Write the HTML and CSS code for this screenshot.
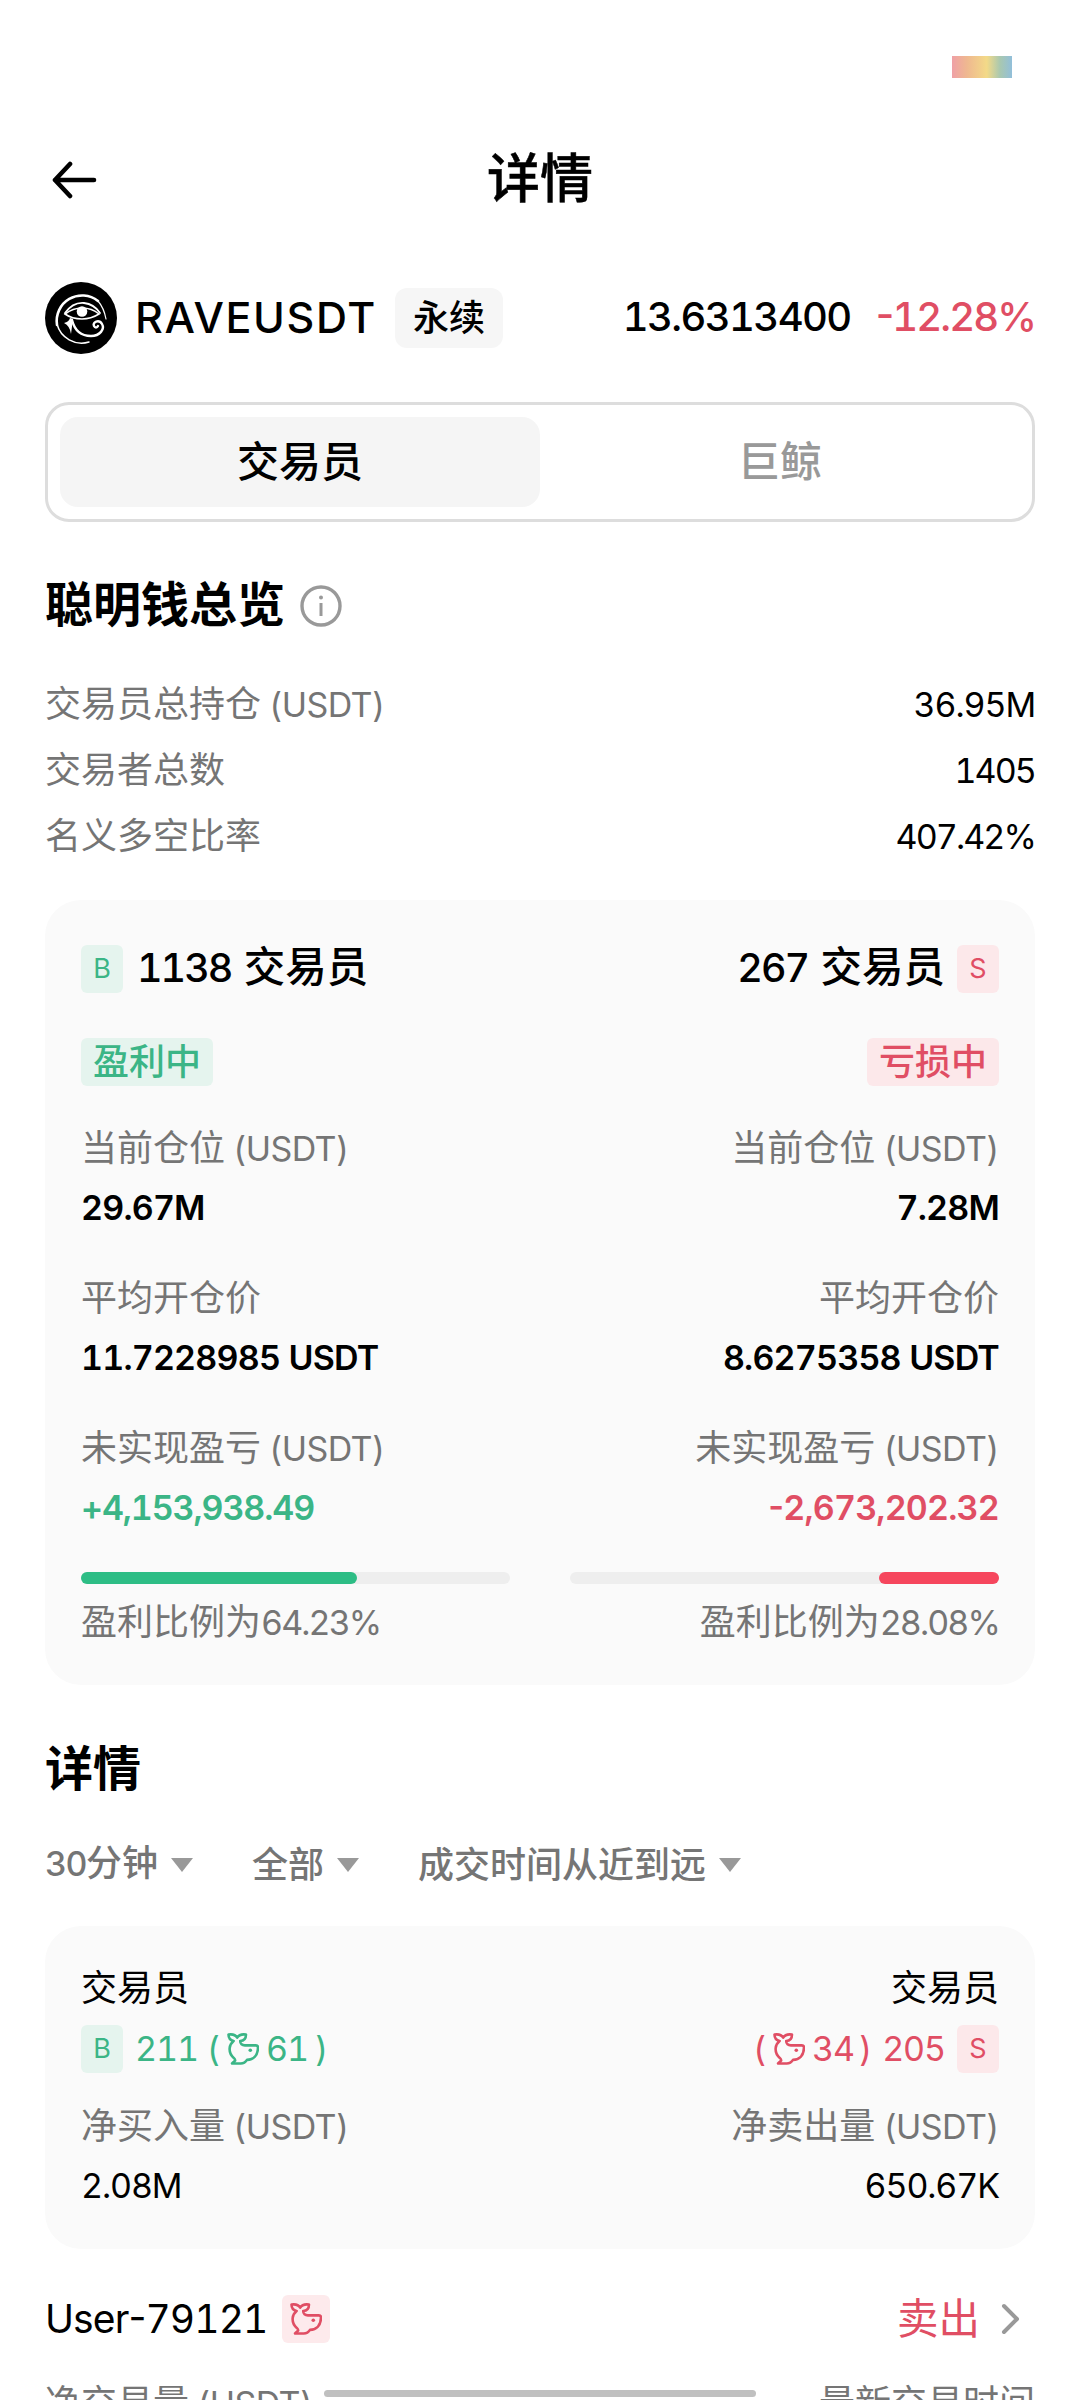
FILE: index.html
```html
<!DOCTYPE html>
<html lang="zh-CN">
<head>
<meta charset="utf-8">
<title>详情</title>
<link rel="stylesheet" href="styles.css">
</head>
<body>
<svg class="defs" aria-hidden="true">
  <symbol id="whale" viewBox="0 0 32 32">
    <path d="M1.500 1.500C5 1 8.500 1.600 10.200 4.600C11.900 1.600 15 1 19 1.500C19 5.500 17 7.800 13.200 8C13.200 10.800 15 12.600 18.400 12.400H28.800C30.300 12.400 31 13.200 31 14.600C30.800 22.500 26.500 26.700 20 26.900C18.200 29.800 16 30.700 13 30.500H5C6 29 7 28.600 8.200 27.500C8.200 26.500 7.800 25.800 6.800 24.900C3.400 22.200 2.300 18.500 2.700 14.800C3 12 4.300 9.800 6.600 7.900C3.200 7.200 1.500 5 1.500 1.500Z" fill="none" stroke="currentColor" stroke-width="2.600" stroke-linejoin="round"/>
    <circle cx="23.300" cy="17.300" r="1.800" fill="currentColor"/>
  </symbol>
</svg>
<div class="page">
  <div class="status"><span class="chip"></span></div>
  <header class="header">
    <svg class="back" viewBox="0 0 46 38"><path d="M19 3L4 19L19 35M4 19H43" fill="none" stroke="#000" stroke-width="4.600" stroke-linecap="round" stroke-linejoin="round"/></svg>
    <h1 class="title">详情</h1>
  </header>

  <section class="coin">
    <svg class="logo" viewBox="0 0 72 72">
      <circle cx="36" cy="36" r="36" fill="#000"/>
      <g fill="none" stroke="#fff" stroke-linecap="round">
        <path d="M53 19A25.500 25.500 0 0 0 12 43" stroke-width="2.600"/>
        <path d="M12 42A25.500 25.500 0 0 0 44 60" stroke-width="1.500"/>
        <path d="M53 19Q59 26 61 37" stroke-width="1.200"/>
        <path d="M20 31Q28 20 39 21Q49 22 55 31" stroke-width="1.800"/>
        <path d="M20 32Q28 26 37 26Q47 26 54 32Q46 37 37 37Q27 37 20 32Z" stroke-width="1.600"/>
        <path d="M27 38C30 50 38 54 46 54C55 54 60 47 57 42C54 37 47 40 49 44C50 46 52 46 53 44" stroke-width="2.400"/>
      </g>
      <circle cx="37" cy="29.500" r="5.300" fill="#fff"/>
      <path d="M25 36L28 37L26 52Q25 44 19 41Q24 40 25 36Z" fill="#fff"/>
    </svg>
    <span class="symbol">RAVEUSDT</span>
    <span class="perp">永续</span>
    <span class="price">13.6313400</span>
    <span class="change"><span class="dash">-</span>12.28%</span>
  </section>

  <nav class="tabs">
    <div class="tab tab-active">交易员</div>
    <div class="tab">巨鲸</div>
  </nav>

  <div class="heading">
    <h2>聪明钱总览</h2>
    <svg class="info" viewBox="0 0 42 42"><circle cx="21" cy="21" r="19" fill="none" stroke="#999" stroke-width="3.400"/><circle cx="21" cy="12.500" r="2" fill="#999"/><path d="M21 18V31" stroke="#999" stroke-width="3"/></svg>
  </div>

  <dl class="stats">
    <div class="stat"><dt>交易员总持仓 <span class="en unit">(USDT)</span></dt><dd class="en">36.95M</dd></div>
    <div class="stat"><dt>交易者总数</dt><dd class="en tight">1405</dd></div>
    <div class="stat"><dt>名义多空比率</dt><dd class="en tight">407.42%</dd></div>
  </dl>

  <section class="card overview">
    <div class="side">
      <div class="count"><span class="badge buy">B</span><span><span class="num">1138</span> 交易员</span></div>
      <span class="tag buy">盈利中</span>
      <div class="metric"><div class="label">当前仓位 <span class="en unit">(USDT)</span></div><div class="value en">29.67M</div></div>
      <div class="metric"><div class="label">平均开仓价</div><div class="value en">11.7228985 USDT</div></div>
      <div class="metric"><div class="label">未实现盈亏 <span class="en unit">(USDT)</span></div><div class="value en gain up">+4,153,938.49</div></div>
      <div class="bar"><div class="fill fill-up" style="width:64.23%"></div></div>
      <div class="label ratio">盈利比例为<span class="en tight">64.23%</span></div>
    </div>
    <div class="side right">
      <div class="count"><span><span class="num">267</span> 交易员</span><span class="badge sell">S</span></div>
      <span class="tag sell">亏损中</span>
      <div class="metric"><div class="label">当前仓位 <span class="en unit">(USDT)</span></div><div class="value en">7.28M</div></div>
      <div class="metric"><div class="label">平均开仓价</div><div class="value en">8.6275358 USDT</div></div>
      <div class="metric"><div class="label">未实现盈亏 <span class="en unit">(USDT)</span></div><div class="value en down"><span class="dash">-</span>2,673,202.32</div></div>
      <div class="bar"><div class="fill fill-down" style="width:28.08%"></div></div>
      <div class="label ratio">盈利比例为<span class="en tight">28.08%</span></div>
    </div>
  </section>

  <div class="heading details"><h2>详情</h2></div>

  <div class="filters">
    <span class="filter"><span><span class="en">30</span>分钟</span><i class="caret"></i></span>
    <span class="filter">全部<i class="caret"></i></span>
    <span class="filter">成交时间从近到远<i class="caret"></i></span>
  </div>

  <section class="card flow">
    <div class="side">
      <div class="label dark">交易员</div>
      <div class="whales up"><span class="badge buy">B</span><span class="en total">211</span><span class="en open">(</span><svg class="whale"><use href="#whale"/></svg><span class="en part">61</span><span class="en close">)</span></div>
      <div class="label net">净买入量 <span class="en unit">(USDT)</span></div>
      <div class="value en thin">2.08M</div>
    </div>
    <div class="side right">
      <div class="label dark">交易员</div>
      <div class="whales down"><span class="en">(</span><svg class="whale"><use href="#whale"/></svg><span class="en part">34</span><span class="en close">)</span><span class="en total">205</span><span class="badge sell">S</span></div>
      <div class="label net">净卖出量 <span class="en unit">(USDT)</span></div>
      <div class="value en thin">650.67K</div>
    </div>
  </section>

  <div class="user">
    <span class="username">User<span class="dash">-</span>79121</span>
    <span class="whale-badge"><svg class="whale"><use href="#whale"/></svg></span>
    <span class="action">卖出</span>
    <svg class="chevron" viewBox="0 0 20 32"><path d="M3 3L16 16L3 29" fill="none" stroke="#999" stroke-width="4" stroke-linecap="round" stroke-linejoin="round"/></svg>
  </div>
  <div class="last"><span>净交易量 <span class="en unit">(USDT)</span></span><span>最新交易时间</span></div>
  <div class="home"></div>
</div>
</body>
</html>
```
FILE: styles.css
```css
* { box-sizing: border-box; }
body {
  margin: 0;
  background: #fff;
  color: #000;
  font-family: "Noto Sans CJK SC", sans-serif;
  font-size: 36px;
}
h1, h2, dl, dd { margin: 0; }
.defs { position: absolute; width: 0; height: 0; }
.page {
  position: relative;
  width: 1080px;
  height: 2400px;
  padding: 0 45px;
  overflow: hidden;
}
.en, .num, .symbol, .price, .change, .username, .badge {
  font-family: Inter, sans-serif;
  font-feature-settings: "tnum";
}
.en { font-size: 34px; letter-spacing: -1.1px; }
.unit { letter-spacing: -0.6px; }
.tight { letter-spacing: -1.9px; }
.dash { font-feature-settings: "case"; }

.status { height: 120px; display: flex; justify-content: flex-end; padding: 56px 23px 0 0; }
.chip { width: 60px; height: 22px; background: linear-gradient(90deg, #efa0a6, #efb890 25%, #f3da88 58%, #a9c8b0 80%, #92bfda); }
.header { height: 120px; display: flex; align-items: center; }
.back { width: 46px; height: 38px; margin-left: 6px; }
.title { flex: 1; margin: 0 52px 10px 0; text-align: center; font-size: 53px; font-weight: 500; line-height: 80px; -webkit-text-stroke: 0.5px #000; }

.coin { height: 72px; margin-top: 42px; display: flex; align-items: center; }
.logo { width: 72px; height: 72px; }
.symbol { margin: -3px 0 0 18px; font-size: 43px; font-weight: 500; letter-spacing: 1.6px; }
.perp { width: 108px; height: 60px; margin-left: 18px; border-radius: 12px; background: #f6f6f6; line-height: 55px; text-align: center; font-weight: 500; }
.price { margin: -3px 0 0 auto; font-size: 40px; font-weight: 500; letter-spacing: -1.6px; }
.change { margin: -3px 0 0 25px; color: #e04e64; font-size: 40px; font-weight: 500; letter-spacing: -1.9px; }

.tabs { height: 120px; margin-top: 48px; padding: 12px; display: flex; border: 3px solid #ddd; border-radius: 24px; }
.tab { flex: 1; border-radius: 18px; line-height: 83px; text-align: center; font-size: 42px; font-weight: 500; color: #999; }
.tab-active { background: #f5f5f5; color: #000; }

.heading { height: 60px; margin-top: 50px; display: flex; align-items: center; }
.heading h2 { margin-top: -2px; font-size: 48px; line-height: 60px; font-weight: 700; }
.info { width: 42px; height: 42px; margin: 8px 0 0 15px; }

.stats { margin-top: 36px; }
.stat { display: flex; justify-content: space-between; align-items: baseline; height: 66px; line-height: 66px; }
.stat dt, .label { color: #757575; }

.card { padding: 45px 36px 35px; display: flex; justify-content: space-between; border-radius: 36px; background: #fafafa; }
.overview { margin-top: 34px; height: 785px; }
.side { width: 429px; display: flex; flex-direction: column; align-items: flex-start; }
.right { align-items: flex-end; }
.count { height: 48px; display: flex; align-items: center; gap: 14px; line-height: 42px; font-size: 41.5px; font-weight: 500; white-space: pre; }
.right .count { gap: 12px; }
.count > span:not(.badge) { margin-top: -6px; word-spacing: 3px; }
.num { font-size: 39.5px; letter-spacing: -2px; }
.badge { width: 42px; height: 48px; border-radius: 6px; line-height: 47px; text-align: center; font-size: 27px; font-weight: 400; }
.tag { height: 48px; margin-top: 45px; padding: 0 12px; border-radius: 6px; line-height: 42px; font-weight: 500; }
.buy { background: #e5f4ee; color: #3bb586; }
.sell { background: #fce8ea; color: #e04e64; }
.metric { margin-bottom: 28px; }
.tag + .metric { margin-top: 30px; }
.label { line-height: 58px; height: 60px; }
.value { height: 60px; margin-top: 2px; line-height: 60px; font-weight: 600; letter-spacing: -0.8px; }
.gain { letter-spacing: -1.1px; }
.right .metric { text-align: right; }
.up { color: #3bb586; }
.down { color: #e04e64; }
.bar { width: 100%; height: 12px; margin-top: 6px; border-radius: 6px; background: #eee; display: flex; }
.right .bar { justify-content: flex-end; }
.fill { border-radius: 6px; }
.fill-up { background: #2dbd85; }
.fill-down { background: #f6465d; }
.ratio { margin-top: 6px; }

.details { margin-top: 51px; }
.filters { height: 60px; margin-top: 36px; display: flex; gap: 59px; line-height: 60px; color: #757575; font-weight: 500; }
.filter { display: flex; align-items: center; gap: 13px; }
.filter .en { letter-spacing: -1.6px; }
.caret { margin-top: 6px; border: 11px solid transparent; border-top: 14px solid #999; border-bottom: 0; }

.flow { height: 323px; margin-top: 34px; padding: 30px 36px 33px; }
.dark { color: #000; }
.whales { height: 48px; margin-top: 9px; display: flex; align-items: center; line-height: 46px; }
.total { margin-left: 12px; }
.open { margin-left: 9px; }
.part { margin-left: 7px; }
.close { margin-left: 7px; }
.whales .whale { margin-left: 8px; }
.right .total { margin: 0 12px 0 11px; }
.right .close { margin-left: 5px; }
.whale { width: 32px; height: 32px; display: block; }
.net { margin-top: 21px; }
.thin { font-weight: 400; letter-spacing: -1.1px; }

.user { height: 60px; margin-top: 40px; display: flex; align-items: center; }
.username { margin-top: -2px; font-size: 39px; letter-spacing: -0.9px; }
.whale-badge { width: 48px; height: 48px; margin-left: 15px; padding: 8px; border-radius: 6px; background: #fdeaec; color: #e04e64; }
.action { margin: -6px 21px 0 auto; color: #e04e64; font-size: 41.5px; line-height: 60px; }
.chevron { width: 20px; height: 32px; margin-right: 14px; }
.last { height: 60px; margin-top: 21px; display: flex; justify-content: space-between; line-height: 60px; color: #757575; }
.home { position: absolute; left: 324px; top: 2390px; width: 432px; height: 7px; border-radius: 4px; background: #c0c0c0; }
```
